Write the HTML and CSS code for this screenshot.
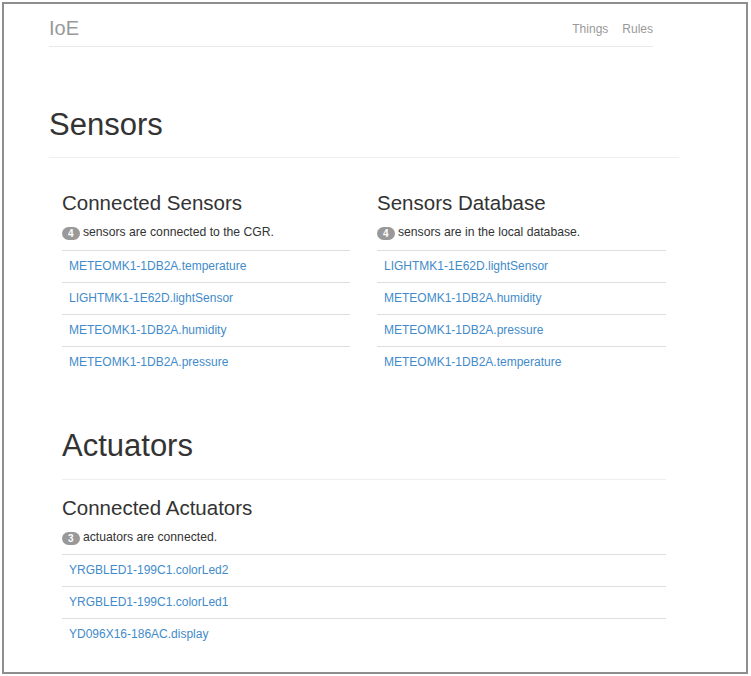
FILE: index.html
```html
<!DOCTYPE html>
<html lang="en">
<head>
  <meta charset="UTF-8" />
  <title>IoE - Sensors</title>
  <link rel="stylesheet" href="styles.css">
</head>
<body>

  <div class="frame">

    <div class="navbar">
      <a class="brand" href="#">IoE</a>
      <ul class="nav">
        <li><a href="#">Things</a></li>
        <li><a href="#">Rules</a></li>
      </ul>
    </div>

    <div class="page-header wide">
      <h1>Sensors</h1>
    </div>

    <div class="row">
      <div class="col">
        <h3>Connected Sensors</h3>
        <p class="count"><span class="badge">4</span> sensors are connected to the CGR.</p>
        <div class="list">
          <a href="#">METEOMK1-1DB2A.temperature</a>
          <a href="#">LIGHTMK1-1E62D.lightSensor</a>
          <a href="#">METEOMK1-1DB2A.humidity</a>
          <a href="#">METEOMK1-1DB2A.pressure</a>
        </div>
      </div>
      <div class="col right">
        <h3>Sensors Database</h3>
        <p class="count"><span class="badge">4</span> sensors are in the local database.</p>
        <div class="list">
          <a href="#">LIGHTMK1-1E62D.lightSensor</a>
          <a href="#">METEOMK1-1DB2A.humidity</a>
          <a href="#">METEOMK1-1DB2A.pressure</a>
          <a href="#">METEOMK1-1DB2A.temperature</a>
        </div>
      </div>
    </div>

    <div class="section">
      <div class="page-header">
        <h1>Actuators</h1>
      </div>
      <h3 class="first">Connected Actuators</h3>
      <p class="count"><span class="badge">3</span> actuators are connected.</p>
      <div class="list tight">
        <a href="#">YRGBLED1-199C1.colorLed2</a>
        <a href="#">YRGBLED1-199C1.colorLed1</a>
        <a href="#">YD096X16-186AC.display</a>
      </div>
    </div>

  </div>

</body>
</html>
```

FILE: styles.css
```css
body {
  margin: 0;
  font-family: "Liberation Sans", Arial, sans-serif;
  font-size: 12px;
  color: #333;
  background: #fff;
}

a {
  text-decoration: none;
}

.frame {
  margin: 2px 0 0 2px;
  width: 742px;
  height: 668px;
  border: 2px solid #8e8e8e;
  overflow: hidden;
}

/* top bar */
.navbar {
  margin-left: 45px;
  width: 604px;
  height: 42px;
  border-bottom: 1px solid #e9e9e9;
  display: flex;
  justify-content: space-between;
  align-items: flex-start;
}

.brand {
  padding-top: 13px;
  font-size: 20px;
  line-height: 22px;
  color: #999;
}

.nav {
  list-style: none;
  margin: 0;
  padding: 18px 0 0;
  display: flex;
  gap: 14px;
}

.nav a {
  font-size: 12px;
  line-height: 14px;
  color: #999;
}

/* headers */
.page-header {
  padding-bottom: 15px;
  border-bottom: 1px solid #eee;
}

.page-header.wide {
  margin: 61px 0 0 45px;
  width: 630px;
}

h1 {
  margin: 0;
  font-size: 31px;
  line-height: 34px;
  font-weight: 400;
  color: #333;
}

h3 {
  margin: 33px 0 0;
  font-size: 20.5px;
  line-height: 24px;
  font-weight: 400;
  color: #333;
}

.count {
  margin: 9px 0 0;
  font-size: 12.2px;
  line-height: 17px;
  color: #333;
}

.badge {
  display: inline-block;
  padding: 2px 6px;
  font-size: 10px;
  line-height: 9px;
  font-weight: bold;
  color: #fff;
  background: #999;
  border-radius: 7px;
  vertical-align: -1px;
}

/* item lists */
.list {
  margin-top: 9px;
}

.list.tight {
  margin-top: 8px;
}

.list a {
  display: block;
  padding: 7px;
  line-height: 17px;
  border-top: 1px solid #ddd;
  color: #428bca;
}

/* columns */
.row {
  margin-left: 58px;
  display: flex;
  gap: 27px;
}

.col {
  width: 288px;
}

.col.right {
  width: 289px;
}

.section {
  margin: 51px 0 0 58px;
  width: 604px;
}

.section .page-header {
  padding-bottom: 16px;
}

.section h3.first {
  margin-top: 16px;
}
```
